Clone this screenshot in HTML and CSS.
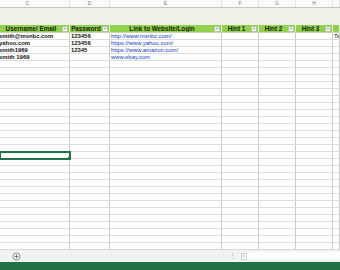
FILE: index.html
```html
<!DOCTYPE html>
<html lang="en">

<head>
    <meta charset="UTF-8" />
    <title>Passwords</title>
    <link rel="stylesheet" href="styles.css">
</head>

<body>
    <div class="sheet">
        <!-- column letters -->
        <div class="cols">
            <span class="col-c">C</span><span>D</span><span>E</span><span>F</span><span>G</span><span>H</span><span></span>
        </div>

        <!-- title band -->
        <div class="band"></div>

        <div class="grid" id="grid">
            <div class="row head">
                <div class="cell"><b>Username/ Email</b><i class="flt"></i></div>
                <div class="cell"><b>Password</b><i class="flt"></i></div>
                <div class="cell"><b>Link to Website/Login</b><i class="flt"></i></div>
                <div class="cell"><b>Hint 1</b><i class="flt"></i></div>
                <div class="cell"><b>Hint 2</b><i class="flt"></i></div>
                <div class="cell"><b>Hint 3</b><i class="flt"></i></div>
                <div class="cell"></div>
            </div>
            <div class="row">
                <div class="cell name">smith@msnbc.com</div>
                <div class="cell num">123456</div>
                <div class="cell"><a href="#">http://www.msnbc.com/</a></div>
                <div class="cell"></div><div class="cell"></div><div class="cell"></div>
                <div class="cell">Ta</div>
            </div>
            <div class="row">
                <div class="cell name">yahoo.com</div>
                <div class="cell num">123456</div>
                <div class="cell"><a href="#">https://www.yahoo.com/</a></div>
                <div class="cell"></div><div class="cell"></div><div class="cell"></div><div class="cell"></div>
            </div>
            <div class="row">
                <div class="cell name">smith1969</div>
                <div class="cell num">12345</div>
                <div class="cell"><a href="#">https://www.amazon.com/</a></div>
                <div class="cell"></div><div class="cell"></div><div class="cell"></div><div class="cell"></div>
            </div>
            <div class="row">
                <div class="cell name">smith 1969</div>
                <div class="cell num"></div>
                <div class="cell"><a href="#">www.ebay.com</a></div>
                <div class="cell"></div><div class="cell"></div><div class="cell"></div><div class="cell"></div>
            </div>
        </div>

        <!-- sheet tabs -->
        <div class="tabs">
            <svg class="add" width="9" height="9" viewBox="0 0 9 9">
                <circle cx="4.5" cy="4.5" r="3.6" fill="none" stroke="#8a8a8a" stroke-width="0.9" />
                <path d="M4.5 2.6v3.8M2.6 4.5h3.8" stroke="#6a6a6a" stroke-width="0.9" />
            </svg>
            <span class="dots">⋮</span>
            <span class="prev"></span>
            <span class="track"></span>
        </div>

        <div class="status"></div>
    </div>
    <script>
        // 空白行
        const grid = document.getElementById("grid");
        for (let r = 0; r < 28; r++) {
            const row = document.createElement("div");
            row.className = "row";
            for (let c = 0; c < 7; c++) {
                const cell = document.createElement("div");
                cell.className = "cell";
                // 选中的单元格
                if (r === 13 && c === 0) cell.classList.add("sel");
                row.appendChild(cell);
            }
            grid.appendChild(row);
        }
    </script>
</body>

</html>
```

FILE: styles.css
```css
* {
    margin: 0;
    padding: 0;
    box-sizing: border-box;
}

body {
    font-family: "Liberation Sans", Arial, sans-serif;
    background: #fff;
}

.sheet {
    display: flex;
    flex-direction: column;
    width: 340px;
    height: 270px;
    overflow: hidden;
}

.cols,
.row {
    display: grid;
    grid-template-columns: 70px 40px 112px 37px 37px 37px 1fr;
}

.cols {
    height: 8px;
    background: #fafafa;
    border-bottom: 1px solid #c6c6c6;
    color: #7c7c7c;
    font-size: 5px;
    line-height: 7px;
    text-align: center;
}

.cols span {
    border-right: 1px solid #e4e4e4;
}

.cols .col-c {
    padding-right: 14px;
}

.band {
    height: 17px;
    background: #edf1e6;
}

.grid {
    height: 224px;
    overflow: hidden;
}

.row {
    height: 7px;
}

.cell {
    position: relative;
    overflow: hidden;
    white-space: nowrap;
    padding-left: 1px;
    border-right: 1px solid #cbcbcb;
    border-bottom: 1px solid #dedede;
    font-size: 5.9px;
    line-height: 6px;
    color: #111;
}

.cell.name {
    text-indent: -2px;
    font-weight: bold;
}

.cell.num {
    font-weight: bold;
}

.cell a {
    color: #1438c4;
    text-decoration: underline;
}

.row.head {
    height: 8px;
}

.row.head .cell {
    display: flex;
    align-items: center;
    padding: 0 1px 0 0;
    background: #92d050;
    border-right: 1px solid #e6f0da;
    border-bottom: 1px solid #c4d8ae;
}

.row.head b {
    flex: 1;
    text-align: center;
    font-size: 6.3px;
    line-height: 7px;
    color: #14220a;
}

.flt {
    position: relative;
    width: 6px;
    height: 6px;
    background: #eef3e8;
    border: 1px solid #b6c7a4;
}

.flt::after {
    content: "";
    position: absolute;
    left: 1px;
    top: 1.5px;
    border-left: 1.2px solid transparent;
    border-right: 1.2px solid transparent;
    border-top: 1.4px solid #555;
}

.cell.sel {
    overflow: visible;
    outline: 2px solid #217346;
    outline-offset: -1px;
    z-index: 1;
}

.cell.sel::after {
    content: "";
    position: absolute;
    right: -2px;
    bottom: -2px;
    width: 3px;
    height: 3px;
    background: #217346;
}

.tabs {
    display: flex;
    align-items: center;
    height: 13px;
    background: #f2f2f2;
    border-top: 1px solid #d8d8d8;
}

.add {
    margin-left: 12px;
}

.dots {
    margin-left: auto;
    font-size: 7px;
    color: #a0a0a0;
    line-height: 8px;
}

.prev {
    position: relative;
    width: 6px;
    height: 7px;
    margin-left: 5px;
    background: #fff;
    border: 1px solid #d0d0d0;
}

.prev::after {
    content: "";
    position: absolute;
    left: 1px;
    top: 1px;
    border-top: 1.3px solid transparent;
    border-bottom: 1.3px solid transparent;
    border-right: 1.6px solid #555;
}

.track {
    width: 93px;
    height: 8px;
    background: #fff;
}

.status {
    height: 8px;
    background: #217346;
}
```
